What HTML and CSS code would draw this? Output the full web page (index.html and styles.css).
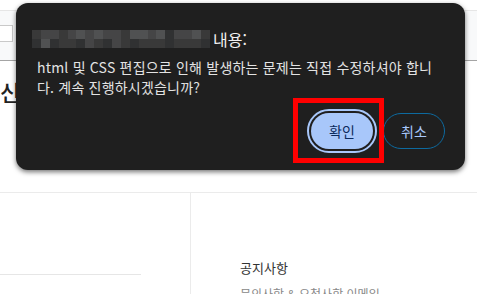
FILE: index.html
```html
<!DOCTYPE html>
<html lang="ko">
<head>
    <meta charset="UTF-8">
    <meta name="viewport" content="width=device-width, initial-scale=1.0">
    <title>확인</title>
    <link rel="stylesheet" href="styles.css">
</head>
<body>

    <div class="page">
        <div class="topbar">
            <div class="search"></div>
        </div>
        <h2 class="page-title">신</h2>
        <div class="content">
            <div class="side">
                <div class="side-line"></div>
            </div>
            <div class="notice">
                <h3>공지사항</h3>
                <p>문의사항 &amp; 요청사항 이메일</p>
            </div>
        </div>
    </div>

    <div class="dialog">
        <div class="dialog-title">
            <span class="mosaic">
                <i class="m2"></i><i class="m3"></i><i class="m3"></i><i class="m2"></i><i class="m3"></i><i class="m4"></i><i class="m3"></i><i class="m4"></i><i class="m3"></i><i class="m3"></i><i class="m2"></i><i class="m4"></i><i class="m4"></i><i class="m3"></i><i class="m4"></i><i class="m1"></i><i class="m3"></i><i class="m3"></i><i class="m4"></i><i class="m2"></i>
                <i class="m1"></i><i class="m4"></i><i class="m1"></i><i class="m2"></i><i class="m2"></i><i class="m1"></i><i class="m3"></i><i class="m2"></i><i class="m1"></i><i class="m3"></i><i class="m2"></i><i class="m1"></i><i class="m2"></i><i class="m2"></i><i class="m2"></i><i class="m1"></i><i class="m2"></i><i class="m2"></i><i class="m2"></i><i class="m1"></i>
            </span>
            <span>내용:</span>
        </div>
        <p class="dialog-msg">html 및 CSS 편집으로 인해 발생하는 문제는 직접 수정하셔야 합니다. 계속 진행하시겠습니까?</p>
        <div class="dialog-btns">
            <button class="btn btn-ok">확인</button>
            <button class="btn btn-cancel">취소</button>
        </div>
    </div>

</body>
</html>
```

FILE: styles.css
```css
* {
    margin: 0;
    padding: 0;
    box-sizing: border-box;
}
body {
    background: #fff;
    font-family: "Noto Sans CJK KR", "Noto Sans", sans-serif;
    overflow: hidden;
    height: 294px;
}
.topbar {
    margin-top: 10px;
    height: 51px;
    background: #f8f9fa;
    border-top: 1px solid #e6e6e6;
    border-bottom: 1px solid #a4a4a4;
    padding-top: 14px;
}
.search {
    width: 14px;
    height: 17px;
    margin-left: -1px;
    background: #fff;
    border: 1px solid #c9c9c9;
}
.page-title {
    margin-top: 15px;
    font-size: 22px;
    line-height: 30px;
    font-weight: 500;
    color: #222;
    white-space: nowrap;
}
.content {
    margin-top: 86px;
    border-top: 1px solid #ebebeb;
    display: grid;
    grid-template-columns: 191px 1fr;
    height: 120px;
}
.side {
    border-right: 1px solid #ebebeb;
    padding-top: 81px;
}
.side-line {
    width: 141px;
    border-top: 1px solid #e6e6e6;
}
.notice {
    padding-left: 49px;
    padding-top: 66px;
}
.notice h3 {
    font-size: 13px;
    line-height: 18px;
    font-weight: 400;
    color: #333;
}
.notice p {
    margin-top: 9px;
    font-size: 12px;
    line-height: 16px;
    color: #888;
}

.dialog {
    position: absolute;
    left: 16px;
    top: 3px;
    width: 449px;
    height: 167px;
    background: #1f1f1f;
    border-radius: 12px;
    box-shadow: 0 2px 5px rgba(0, 0, 0, 0.55);
    padding: 26px 20px 0 16px;
    color: #e3e3e3;
}
.dialog-title {
    display: flex;
    align-items: center;
    height: 20px;
    font-size: 16px;
    line-height: 20px;
    color: #f0f0f0;
}
.mosaic {
    display: grid;
    grid-template-columns: repeat(20, 8.9px);
    grid-template-rows: 9px 9px;
    width: 178px;
    margin-right: 3px;
}
.mosaic i {
    display: block;
}
.m1 { background: #303132; }
.m2 { background: #393939; }
.m3 { background: #454546; }
.m4 { background: #505152; }

.dialog-msg {
    margin-top: 8px;
    padding-left: 5px;
    width: 405px;
    font-size: 14px;
    letter-spacing: 0.2px;
    line-height: 20px;
    word-break: break-all;
}
.dialog-btns {
    margin-top: 16px;
    display: flex;
    justify-content: flex-end;
    gap: 10px;
}
.btn {
    width: 62px;
    height: 36px;
    border-radius: 18px;
    font-family: inherit;
    font-size: 14px;
    cursor: pointer;
}
.btn-ok {
    position: relative;
    background: #a8c7fa;
    color: #0b2a5c;
    border: none;
    outline: 2px solid #a8c7fa;
    outline-offset: 2px;
}
.btn-ok::after {
    content: "";
    position: absolute;
    left: -18px;
    top: -15px;
    right: -11px;
    bottom: -14px;
    border: 5px solid #ff0000;
}
.btn-cancel {
    background: transparent;
    color: #a8c7fa;
    border: 1px solid #0d6a9f;
}
```
